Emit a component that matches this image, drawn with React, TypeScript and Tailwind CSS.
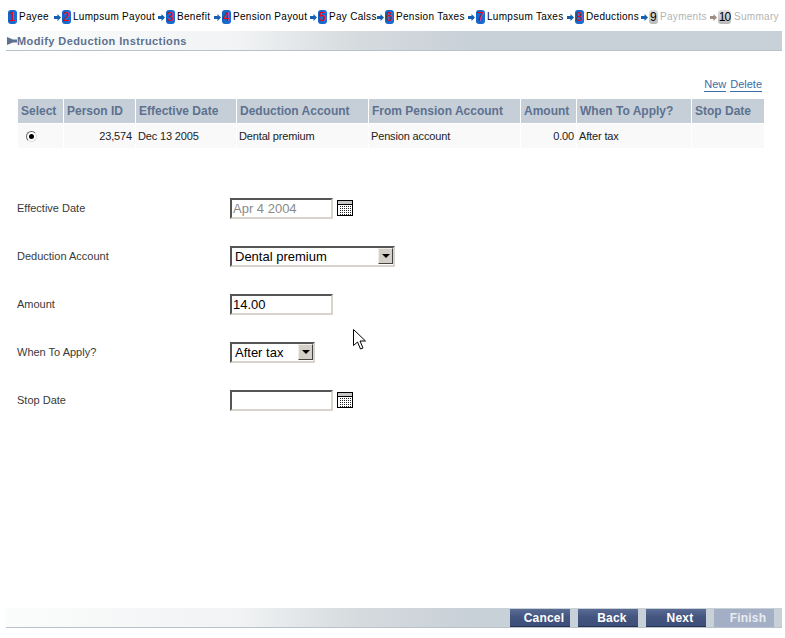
const STEPS = [
  { n: "1", label: "Payee", width: "w-[35px]" },
  { n: "2", label: "Lumpsum Payout", width: "w-[85px]" },
  { n: "3", label: "Benefit", width: "w-[37px]" },
  { n: "4", label: "Pension Payout", width: "w-[77px]" },
  { n: "5", label: "Pay Calss", width: "w-[48px]" },
  { n: "6", label: "Pension Taxes", width: "w-[72px]" },
  { n: "7", label: "Lumpsum Taxes", width: "w-[80px]" },
  { n: "8", label: "Deductions", width: "w-[55px]" },
];

const COLUMNS = [
  { label: "Select", width: "w-[45px]" },
  { label: "Person ID", width: "w-[71px]" },
  { label: "Effective Date", width: "w-[100px]" },
  { label: "Deduction Account", width: "w-[131px]" },
  { label: "From Pension Account", width: "w-[151px]" },
  { label: "Amount", width: "w-[55px]" },
  { label: "When To Apply?", width: "w-[114px]" },
  { label: "Stop Date", width: "w-[72px]" },
];

function StepArrow({ muted }: { muted?: boolean }) {
  const color = muted ? "#a08c80" : "#1560b0";
  return (
    <svg width="7" height="7" viewBox="0 0 7 7" className="mr-px shrink-0">
      <path d="M0 2h3.500V0L7 3.500 3.500 7V5H0z" fill={color} />
    </svg>
  );
}

function StepBadge({ n }: { n: string }) {
  return (
    <span className="flex h-[14px] w-[9px] shrink-0 items-center justify-center rounded-[3px] bg-gradient-to-r from-[#1464c8] to-[#1a70d0] text-[12px] leading-none text-[#ff0000]">
      {n}
    </span>
  );
}

function GreyBadge({ n, wide }: { n: string; wide?: boolean }) {
  return (
    <span
      className={`flex h-[14px] shrink-0 items-center justify-center rounded-[3px] bg-gradient-to-b from-[#e4e4e4] to-[#b8b8b8] text-[12px] leading-none text-black ${
        wide ? "w-[13px] tracking-[-1px]" : "w-[9px]"
      }`}
    >
      {n}
    </span>
  );
}

function CalendarIcon() {
  return (
    <svg width="17" height="17" viewBox="0 0 17 17" className="ml-[4px] shrink-0">
      <rect x="0.5" y="0.5" width="15" height="15" fill="#fff" stroke="#000" />
      <rect x="1" y="1" width="14" height="3" fill="#c8c8c8" />
      <path d="M1 4.500h14" stroke="#000" />
      {[6, 8, 10, 12, 14].map((y) =>
        [3, 5, 7, 9, 11, 13].map((x) => (
          <rect key={`${x}-${y}`} x={x} y={y} width="1" height="1" fill="#222" />
        ))
      )}
    </svg>
  );
}

function FieldRow({ label, children }: { label: string; children: React.ReactNode }) {
  return (
    <div className="flex h-[48px] items-center">
      <div className="w-[213px] text-[11px] text-[#3a3a3a]">{label}</div>
      {children}
    </div>
  );
}

function Input({ value, disabled }: { value?: string; disabled?: boolean }) {
  return (
    <div
      className={`flex h-[21px] w-[103px] items-center border-2 border-t-[#555] border-l-[#555] border-r-[#d8d4cc] border-b-[#d8d4cc] bg-white pl-[1px] pt-px text-[13px] ${
        disabled ? "text-[#8a8a8a]" : "text-black"
      }`}
    >
      {value}
    </div>
  );
}

function Select({ value, width }: { value: string; width: string }) {
  return (
    <div
      className={`flex h-[21px] items-center justify-between border-2 border-t-[#555] border-l-[#555] border-r-[#d8d4cc] border-b-[#d8d4cc] bg-white pl-[3px] text-[13px] text-black ${width}`}
    >
      <span className="pt-px">{value}</span>
      <span className="flex h-[16px] w-[15px] items-center justify-center border border-t-[#f0eee8] border-l-[#f0eee8] border-r-[#444] border-b-[#444] bg-[#d4d0c8]">
        <span className="h-0 w-0 border-x-[4px] border-t-[4px] border-x-transparent border-t-black" />
      </span>
    </div>
  );
}

function FooterButton({ label, disabled }: { label: string; disabled?: boolean }) {
  return (
    <div
      className={`flex h-[18px] w-[60px] items-center justify-center pl-[8px] text-[12px] font-bold tracking-[0.2px] ${
        disabled
          ? "bg-[#a4aec4] text-[#e8ecf2]"
          : "border-b border-[#26334f] bg-gradient-to-b from-[#5a6c94] via-[#43557f] to-[#3d4f78] text-white"
      }`}
    >
      {label}
    </div>
  );
}

export default function App() {
  return (
    <div className="relative h-[638px] w-[785px] overflow-hidden bg-white font-['Liberation_Sans',Arial,sans-serif]">
      {/* steps */}
      <div className="flex h-[31px] items-center pl-[8px] pt-[3px] text-[10px] leading-[14px] tracking-[0.3px] text-black">
        {STEPS.map((s) => (
          <div key={s.n} className="flex items-center">
            <StepBadge n={s.n} />
            <span className={`ml-[2px] whitespace-nowrap ${s.width}`}>{s.label}</span>
            <StepArrow />
          </div>
        ))}
        <GreyBadge n="9" />
        <span className="ml-[2px] w-[50px] whitespace-nowrap text-[#b4b4b4]">Payments</span>
        <StepArrow muted />
        <GreyBadge n="10" wide />
        <span className="ml-[3px] whitespace-nowrap text-[#b4b4b4]">Summary</span>
      </div>

      {/* title */}
      <div className="ml-[6px] flex h-[20px] w-[776px] items-center border-b border-[#b8c2cc] bg-[linear-gradient(to_right,#fbfcfc_0%,#f1f3f4_30%,#d6dbde_45%,#c8d0d8_60%)] pl-[1px] pt-px text-[11px] font-bold tracking-[0.4px] text-[#5d7190]">
        <svg width="10" height="8" viewBox="0 0 10 8" className="shrink-0">
          <path d="M0 0l6 2.500h4v3H6L0 8z" fill="#5d7190" />
        </svg>
        Modify Deduction Instructions
      </div>

      {/* new / delete */}
      <div className="mr-[23px] mt-[27px] flex h-[21px] justify-end gap-[4px] text-[11px] leading-[13px] text-[#3a6ea5]">
        <span className="h-[14px] border-b border-[#3a6ea5]">New</span>
        <span className="h-[14px] border-b border-[#3a6ea5]">Delete</span>
      </div>

      {/* table */}
      <div className="ml-[18px] w-[746px]">
        <div className="flex h-[24px] gap-px">
          {COLUMNS.map((c) => (
            <div
              key={c.label}
              className={`flex items-center whitespace-nowrap bg-[#c6cfd7] pl-[3px] text-[12px] font-bold text-[#5d7190] ${c.width}`}
            >
              {c.label}
            </div>
          ))}
        </div>
        <div className="mt-px flex h-[24px] gap-px text-[11px] tracking-[-0.15px] text-[#222]">
          <div className="flex w-[45px] items-center bg-[#f9f9f9] pl-[8px]">
            <span className="flex h-[11px] w-[11px] items-center justify-center rounded-full border border-t-[#666] border-l-[#666] border-r-[#ddd] border-b-[#ddd] bg-white">
              <span className="h-[5px] w-[5px] rounded-full bg-black" />
            </span>
          </div>
          <div className="flex w-[71px] items-center justify-end bg-[#f9f9f9] pr-[3px] pt-px">23,574</div>
          <div className="flex w-[100px] items-center bg-[#f9f9f9] pl-[2px] pt-px">Dec 13 2005</div>
          <div className="flex w-[131px] items-center bg-[#f9f9f9] pl-[2px] pt-px">Dental premium</div>
          <div className="flex w-[151px] items-center bg-[#f9f9f9] pl-[2px] pt-px">Pension account</div>
          <div className="flex w-[55px] items-center justify-end bg-[#f9f9f9] pr-[2px] pt-px">0.00</div>
          <div className="flex w-[114px] items-center bg-[#f9f9f9] pl-[2px] pt-px">After tax</div>
          <div className="w-[72px] bg-[#f9f9f9]" />
        </div>
      </div>

      {/* form */}
      <div className="ml-[17px] mt-[36px]">
        <FieldRow label="Effective Date">
          <Input value="Apr 4 2004" disabled />
          <CalendarIcon />
        </FieldRow>
        <FieldRow label="Deduction Account">
          <Select value="Dental premium" width="w-[165px]" />
        </FieldRow>
        <FieldRow label="Amount">
          <Input value="14.00" />
        </FieldRow>
        <FieldRow label="When To Apply?">
          <Select value="After tax" width="w-[85px]" />
        </FieldRow>
        <FieldRow label="Stop Date">
          <Input />
          <CalendarIcon />
        </FieldRow>
      </div>

      {/* mouse pointer */}
      <svg width="13" height="22" viewBox="0 0 13 22" className="absolute left-[353px] top-[329px]">
        <path d="M.5.5v16l4-3.500 3 7 2.500-1-3-7h5.500z" fill="#fff" stroke="#000" />
      </svg>

      {/* footer */}
      <div className="absolute bottom-[10px] left-[6px] flex h-[20px] w-[776px] items-center justify-end gap-[8px] border-b border-[#b8c2cc] bg-[linear-gradient(to_right,#fbfcfc_0%,#f1f3f4_30%,#d6dbde_45%,#c8d0d8_60%)] pr-[8px] pt-px">
        <FooterButton label="Cancel" />
        <FooterButton label="Back" />
        <FooterButton label="Next" />
        <FooterButton label="Finish" disabled />
      </div>
    </div>
  );
}
